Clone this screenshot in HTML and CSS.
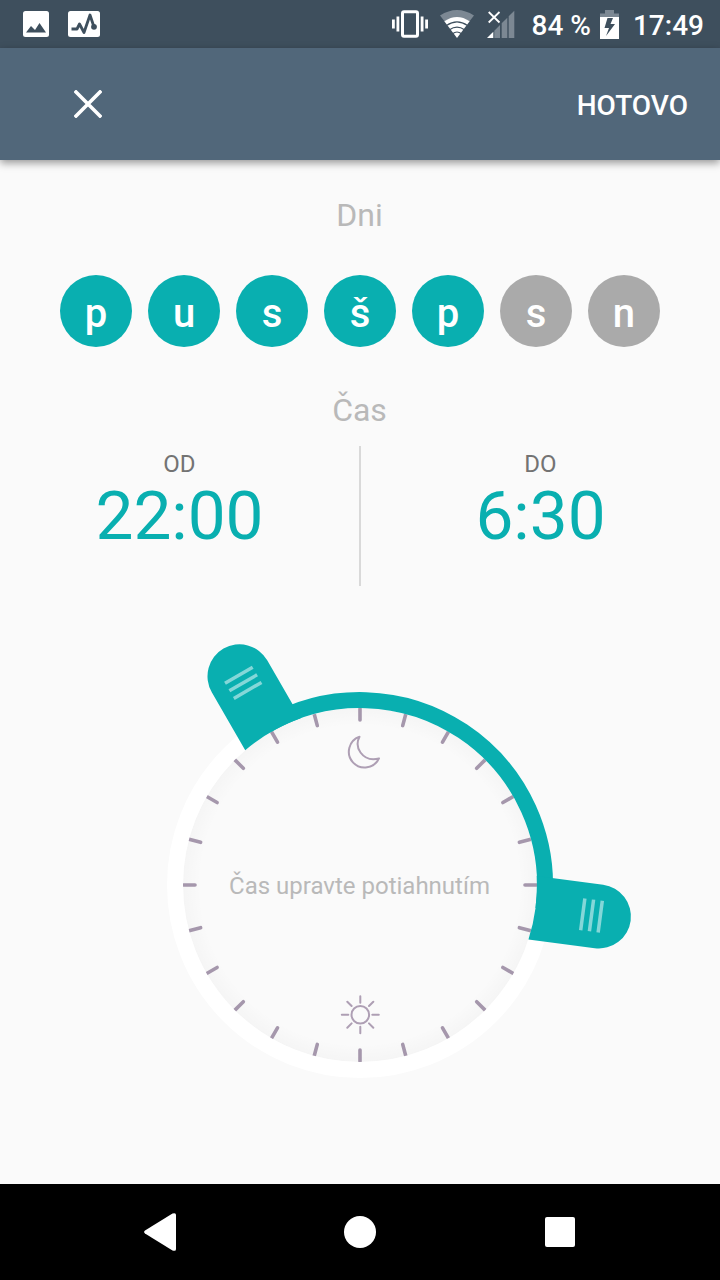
FILE: index.html
```
<!DOCTYPE html>
<html lang="sk">
<head>
    <meta charset="UTF-8">
    <meta name="viewport" content="width=device-width, initial-scale=1.0">
    <title>Dni a čas</title>
    <link rel="stylesheet" href="styles.css">
</head>
<body>
    <div class="status-bar">
        <div class="status-left">
            <svg width="26" height="26" viewBox="0 0 26 26">
                <rect width="26" height="26" rx="2.5" fill="#fff"/>
                <path d="M3 21.5 8 15l4 4 4.500-7 6.500 9.500z" fill="#3e4f5d"/>
            </svg>
            <svg width="32" height="26" viewBox="0 0 32 26">
                <rect width="32" height="26" rx="2.500" fill="#fff"/>
                <path d="M3.500 18H9l2.500-5 4.500 8.500L22 4l4 12" fill="none" stroke="#3e4f5d" stroke-width="2.800" stroke-linejoin="round"/>
                <circle cx="26" cy="15.800" r="2.900" fill="#3e4f5d"/>
            </svg>
        </div>
        <div class="status-right">
            <svg class="vibrate" width="36" height="28" viewBox="0 0 36 28">
                <rect x="10.500" y="1.700" width="15" height="24.600" rx="1.500" fill="none" stroke="#fff" stroke-width="3"/>
                <path d="M1.400 9.500v9M5.900 6.500v15M30.100 6.500v15M34.600 9.500v9" stroke="#fff" stroke-width="2.800"/>
            </svg>
            <svg class="wifi" width="34" height="28" viewBox="0 0 34 28">
                <path d="M0 5.500Q17-5.500 34 5.500L29.500 11.300Q17 3.500 4.500 11.300z" fill="#7c8893"/>
                <path d="M4.300 11.300Q17 2.700 29.700 11.300L17 28z" fill="#fff"/>
                <path d="M6.500 15.500Q17 8.200 27.500 15.500M9.500 19.700Q17 14.500 24.500 19.700M12.500 23.700Q17 20.300 21.500 23.700" fill="none" stroke="#3e4f5d" stroke-width="1.200"/>
            </svg>
            <svg class="signal" width="28" height="28" viewBox="0 0 28 28">
                <path d="M27.300.700v27.300H21.700V6.300zM20.300 7.700V28H14.700V13.300zM13 15v13H7.300v-7.300z" fill="#7c8893"/>
                <path d="M6.300 21.700V28H0z" fill="#fff"/>
                <path d="M1.700 2 12.500 12.500M12.500 2 1.700 12.500" stroke="#fff" stroke-width="1.800"/>
            </svg>
            <span class="battery-text">84 %</span>
            <svg class="battery" width="19" height="29" viewBox="0 0 19 29">
                <path d="M0 8V3.500h5V0h9v3.500h5V8z" fill="#7c8893"/>
                <path d="M0 7h19v22H0z" fill="#fff"/>
                <path d="M7.500 8 4.500 18h4.500L6 26l9-12h-4.500L13 8z" fill="#3e4f5d"/>
            </svg>
            <span class="clock">17:49</span>
        </div>
    </div>

    <header class="app-bar">
        <svg width="28" height="28" viewBox="0 0 28 28">
            <path d="M2 2 26 26M26 2 2 26" stroke="#fff" stroke-width="3.600" stroke-linecap="square"/>
        </svg>
        <span class="done">HOTOVO</span>
    </header>

    <main>
        <h2 class="title">Dni</h2>
        <div class="days">
            <span class="day active">p</span>
            <span class="day active">u</span>
            <span class="day active">s</span>
            <span class="day active">š</span>
            <span class="day active">p</span>
            <span class="day">s</span>
            <span class="day">n</span>
        </div>

        <h2 class="title title-time">Čas</h2>
        <div class="times">
            <div class="time">
                <span class="label">OD</span>
                <span class="value">22:00</span>
            </div>
            <div class="divider"></div>
            <div class="time">
                <span class="label">DO</span>
                <span class="value">6:30</span>
            </div>
        </div>

        <svg class="dial" width="720" height="598" viewBox="-360 -299 720 598">
            <defs>
                <radialGradient id="inner" gradientUnits="userSpaceOnUse" cx="0" cy="0" r="177">
                    <stop offset="0.900" stop-color="#000" stop-opacity="0"/>
                    <stop offset="1" stop-color="#000" stop-opacity="0.020"/>
                </radialGradient>
                <path id="tick" d="M0-178V-165"/>
                <g id="handle">
                    <path d="M-32-174.100V-241A32 32 0 0 1 32-241V-174.100A177 177 0 0 0-32-174.100z" fill="#09afb0"/>
                    <path d="M-16-242.300H16M-16-233.500H16M-16-224.700H16" stroke="#84d7d8" stroke-width="3.500"/>
                </g>
            </defs>
            <circle r="177" fill="url(#inner)"/>

            <!-- one tick per hour -->
            <g class="ticks">
                <use href="#tick"/>
                <use href="#tick" transform="rotate(15)"/>
                <use href="#tick" transform="rotate(30)"/>
                <use href="#tick" transform="rotate(45)"/>
                <use href="#tick" transform="rotate(60)"/>
                <use href="#tick" transform="rotate(75)"/>
                <use href="#tick" transform="rotate(90)"/>
                <use href="#tick" transform="rotate(105)"/>
                <use href="#tick" transform="rotate(120)"/>
                <use href="#tick" transform="rotate(135)"/>
                <use href="#tick" transform="rotate(150)"/>
                <use href="#tick" transform="rotate(165)"/>
                <use href="#tick" transform="rotate(180)"/>
                <use href="#tick" transform="rotate(195)"/>
                <use href="#tick" transform="rotate(210)"/>
                <use href="#tick" transform="rotate(225)"/>
                <use href="#tick" transform="rotate(240)"/>
                <use href="#tick" transform="rotate(255)"/>
                <use href="#tick" transform="rotate(270)"/>
                <use href="#tick" transform="rotate(285)"/>
                <use href="#tick" transform="rotate(300)"/>
                <use href="#tick" transform="rotate(315)"/>
                <use href="#tick" transform="rotate(330)"/>
                <use href="#tick" transform="rotate(345)"/>
            </g>

            <circle r="185" fill="none" stroke="#fff" stroke-width="16"/>
            <path d="M-92.500-160.200A185 185 0 0 1 183.400 24.100" fill="none" stroke="#09afb0" stroke-width="16"/>
            <use href="#handle" transform="rotate(-30)"/>
            <use href="#handle" transform="rotate(97.500)"/>

            <!-- moon -->
            <path class="symbol" d="M-.5-148.200A15.800 15.800 0 1 0 19-126.600C11-124.500 4.500-127 .5-132.500C-3-137.500-3-143.500-.5-148.200z"/>
            <!-- sun -->
            <g class="symbol" transform="translate(.3 129.700)">
                <circle r="8.800"/>
                <path d="M0-18.500V-12M0 12V18.500M-18.500 0H-12M12 0H18.500M-13-13-8.700-8.700M13-13 8.700-8.700M-13 13-8.700 8.700M13 13 8.700 8.700"/>
            </g>

            <text class="hint" x="-.5" y="9">Čas upravte potiahnutím</text>
        </svg>
    </main>

    <nav class="nav-bar">
        <svg width="32" height="38" viewBox="0 0 32 38">
            <path d="M1 17.500 28.500.600Q32-.800 32 2V36Q32 38.800 28.500 37.400L1 20.500Q-.800 19 1 17.500z" fill="#fff"/>
        </svg>
        <svg class="home" width="32" height="32" viewBox="0 0 32 32">
            <circle cx="16" cy="16" r="16" fill="#fff"/>
        </svg>
        <svg width="30" height="30" viewBox="0 0 30 30">
            <rect width="30" height="30" rx="2" fill="#fff"/>
        </svg>
    </nav>
</body>
</html>
```
FILE: styles.css
```
* {
    box-sizing: border-box;
}
body {
    font-family: Roboto, sans-serif;
    display: flex;
    flex-direction: column;
    height: 1280px;
    margin: 0;
    background-color: #fafafa;
    overflow: hidden;
}
svg {
    display: block;
    flex-shrink: 0;
}

/* status bar */
.status-bar {
    display: flex;
    justify-content: space-between;
    align-items: center;
    height: 48px;
    padding: 0 16px 0 23px;
    background-color: #3e4f5d;
    color: #fff;
    font-size: 28px;
    font-weight: 500;
    line-height: 46px;
}
.status-left {
    display: flex;
    gap: 19px;
}
.status-right {
    display: flex;
    align-items: center;
    white-space: nowrap;
}
.wifi {
    margin-left: 12px;
}
.signal {
    margin-left: 13px;
}
.battery-text {
    margin-left: 17px;
    padding-top: 4px;
}
.battery {
    margin: 0 14px 0 9px;
}
.clock {
    padding-top: 4px;
}

/* app bar */
.app-bar {
    display: flex;
    justify-content: space-between;
    align-items: center;
    height: 112px;
    padding: 0 32px 0 74px;
    background-color: #51677a;
    box-shadow: 0 3px 8px rgba(0, 0, 0, .4);
    color: #fff;
}
.done {
    font-size: 28px;
    font-weight: 500;
    padding-top: 2px;
}

/* content */
main {
    display: flex;
    flex-direction: column;
    height: 1024px;
}
.title {
    margin: 36px 0 0;
    padding-right: 1px;
    color: #b9b9b9;
    font-size: 32px;
    font-weight: 400;
    line-height: 38px;
    text-align: center;
}
.title-time {
    margin-top: 44px;
}
.days {
    display: flex;
    justify-content: center;
    gap: 16px;
    margin-top: 41px;
}
.day {
    width: 72px;
    height: 72px;
    padding-top: 3px;
    border-radius: 50%;
    background-color: #aaa;
    color: #fff;
    font-size: 40px;
    font-weight: 500;
    line-height: 72px;
    text-align: center;
}
.day.active {
    background-color: #09afb0;
}
.times {
    display: flex;
    height: 140px;
    margin-top: 17px;
}
.time {
    display: flex;
    flex: 1;
    flex-direction: column;
    align-items: center;
}
.divider {
    width: 2px;
    background-color: #d9d9d9;
}
.label {
    margin-top: 4px;
    color: #737373;
    font-size: 24px;
    line-height: 28px;
}
.value {
    color: #09afb0;
    font-size: 67.5px;
    line-height: 75px;
}

/* dial */
.ticks {
    fill: none;
    stroke: #a597ac;
    stroke-width: 3.6;
    stroke-linecap: round;
}
.symbol {
    fill: none;
    stroke: #ae9fb4;
    stroke-width: 2;
    stroke-linecap: round;
    stroke-linejoin: round;
}
.hint {
    fill: #b9b9b9;
    font-size: 24px;
    text-anchor: middle;
}

/* navigation bar */
.nav-bar {
    display: flex;
    justify-content: space-between;
    align-items: center;
    height: 96px;
    padding: 0 145px 0 144px;
    background-color: #000;
}
.home {
    margin-right: 2px;
}
```
